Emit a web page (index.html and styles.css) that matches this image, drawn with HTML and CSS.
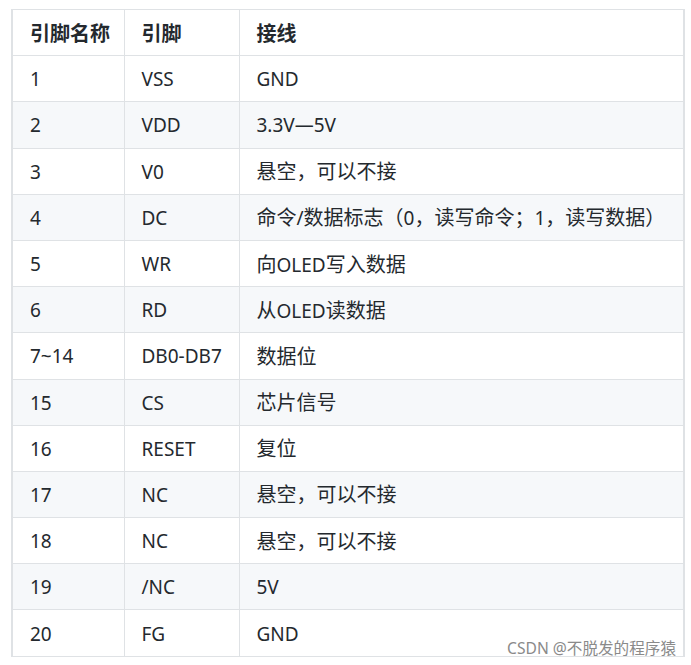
FILE: index.html
```html
<!DOCTYPE html>
<html lang="zh-CN">
<head>
<meta charset="utf-8">
<title>引脚表</title>
<link rel="stylesheet" href="styles.css">
</head>
<body>
<div class="wrap">
<table class="pins">
<thead>
<tr><th class="c1"><span class="zh">引脚名称</span></th><th class="c2"><span class="zh">引脚</span></th><th class="c3"><span class="zh">接线</span></th></tr>
</thead>
<tbody>
<tr><td>1</td><td>VSS</td><td>GND</td></tr>
<tr><td>2</td><td>VDD</td><td>3.3V—5V</td></tr>
<tr><td>3</td><td>V0</td><td><span class="zh">悬空，可以不接</span></td></tr>
<tr><td>4</td><td>DC</td><td><span class="zh">命令</span>/<span class="zh">数据标志（</span>0<span class="zh">，读写命令；</span>1<span class="zh">，读写数据）</span></td></tr>
<tr><td>5</td><td>WR</td><td><span class="zh">向</span>OLED<span class="zh">写入数据</span></td></tr>
<tr><td>6</td><td>RD</td><td><span class="zh">从</span>OLED<span class="zh">读数据</span></td></tr>
<tr><td>7~14</td><td>DB0-DB7</td><td><span class="zh">数据位</span></td></tr>
<tr><td>15</td><td>CS</td><td><span class="zh">芯片信号</span></td></tr>
<tr><td>16</td><td>RESET</td><td><span class="zh">复位</span></td></tr>
<tr><td>17</td><td>NC</td><td><span class="zh">悬空，可以不接</span></td></tr>
<tr><td>18</td><td>NC</td><td><span class="zh">悬空，可以不接</span></td></tr>
<tr><td>19</td><td>/NC</td><td>5V</td></tr>
<tr><td>20</td><td>FG</td><td>GND</td></tr>
</tbody>
</table>
<div class="mark">CSDN @不脱发的程序猿</div>
</div>
</body>
</html>
```
FILE: styles.css
```css
html, body {
  margin: 0;
  padding: 0;
  background: #ffffff;
}
body {
  font-family: "Noto Sans", "Noto Sans CJK SC", sans-serif;
  color: #24292e;
}
.wrap {
  position: relative;
  padding: 9px 0 0 11px;
  width: 672px;
}
.pins {
  border-collapse: collapse;
  width: 672px;
  table-layout: fixed;
  font-size: 19px;
}
.pins th, .pins td {
  border: 1px solid #dfe2e5;
  height: 46.2px;
  padding: 1px 0 0 17px;
  text-align: left;
  vertical-align: middle;
  box-sizing: border-box;
  white-space: nowrap;
  line-height: 24px;
}
.pins th {
  font-weight: 700;
}
.zh {
  font-family: "Noto Sans CJK SC", sans-serif;
  font-size: 20px;
}
.pins .c1 { width: 112px; }
.pins .c2 { width: 115px; }
.pins .c3 { width: 445px; }
.pins tr > :first-child { border-left-width: 2px; }
.pins tr > :last-child { border-right-width: 2px; }
.pins tbody tr:nth-child(even) {
  background: #f6f8fa;
}
.mark {
  position: absolute;
  right: 7px;
  top: 638px;
  font-size: 15.6px;
  line-height: 20px;
  color: #8a8a8a;
  font-family: "Noto Sans", "Noto Sans CJK SC", sans-serif;
}
```
